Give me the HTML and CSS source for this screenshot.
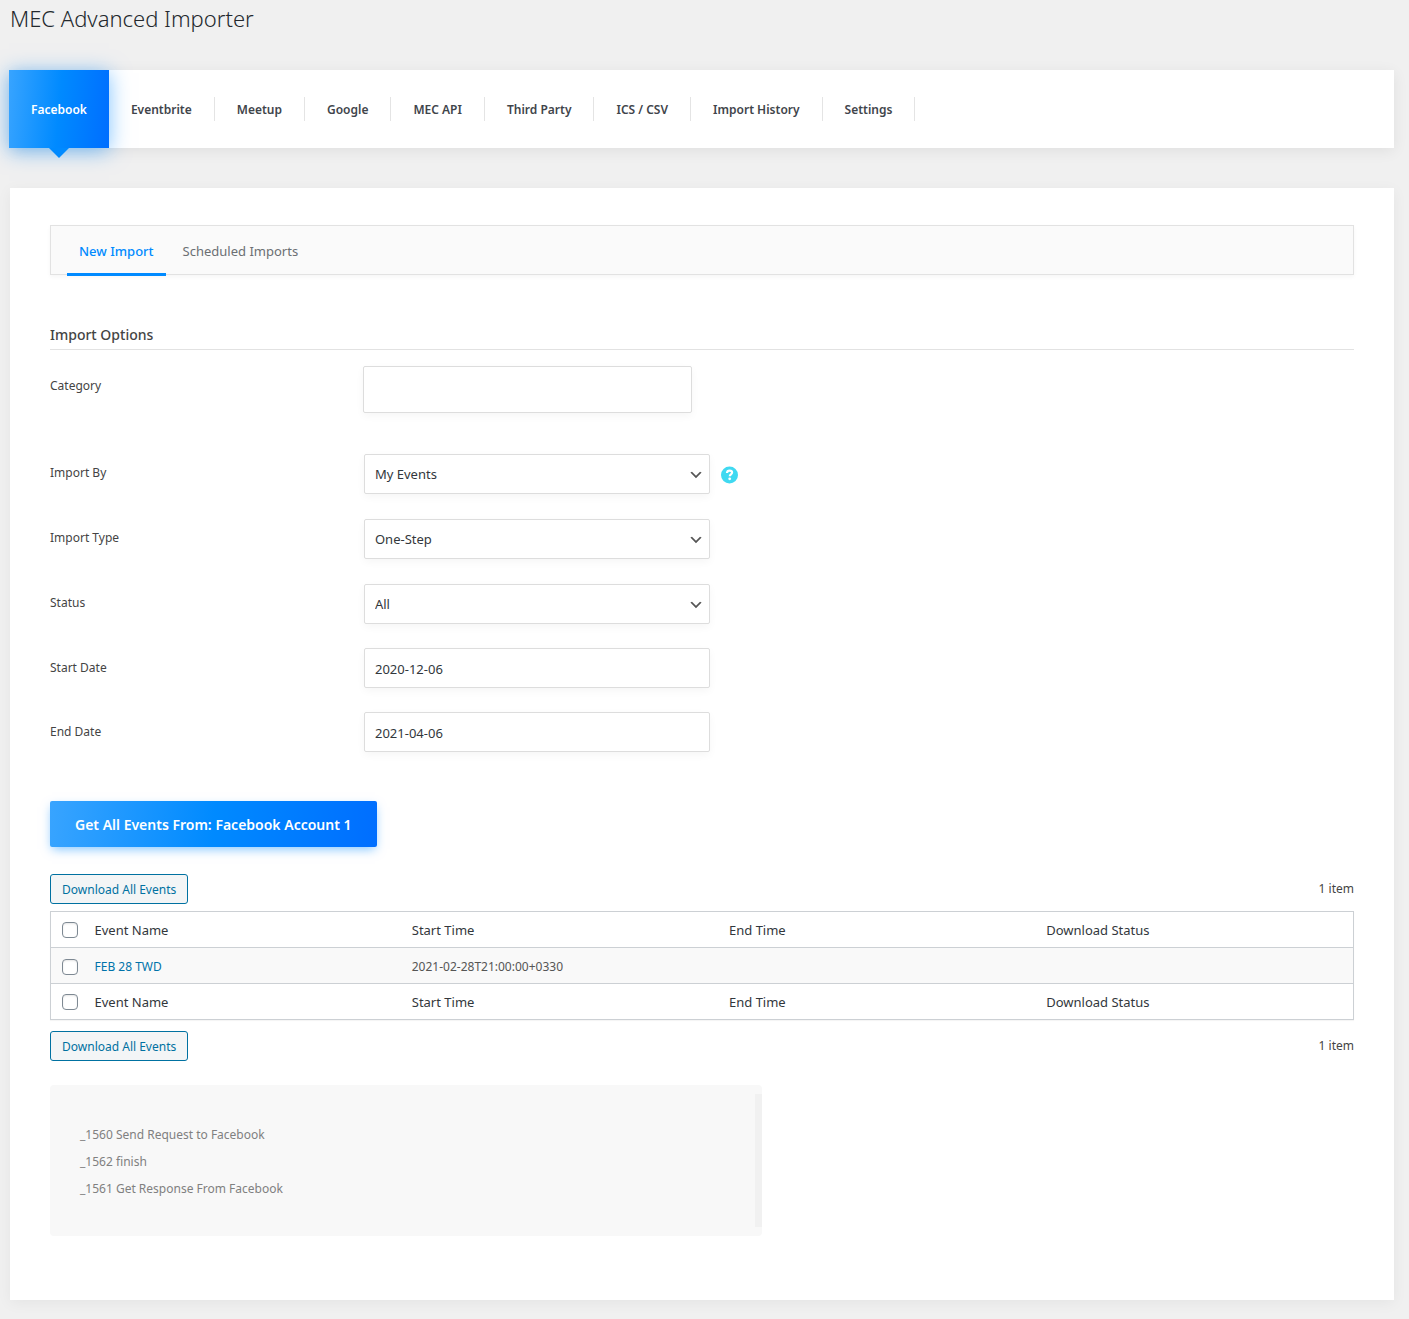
FILE: index.html
```html
<!DOCTYPE html>
<html lang="en">
<head>
  <meta charset="utf-8">
  <meta name="viewport" content="width=device-width, initial-scale=1">
  <title>MEC Advanced Importer</title>
  <link rel="stylesheet" href="styles.css">
</head>
<body>
  <main class="wrap">
    <h1 class="page-title">MEC Advanced Importer</h1>

    <nav class="main-tabs" aria-label="Import sources">
      <a class="main-tab main-tab--active" href="#facebook" aria-current="page">Facebook</a>
      <a class="main-tab" href="#eventbrite">Eventbrite</a>
      <a class="main-tab" href="#meetup">Meetup</a>
      <a class="main-tab" href="#google">Google</a>
      <a class="main-tab" href="#mec-api">MEC API</a>
      <a class="main-tab" href="#third-party">Third Party</a>
      <a class="main-tab" href="#ics-csv">ICS / CSV</a>
      <a class="main-tab" href="#history">Import History</a>
      <a class="main-tab" href="#settings">Settings</a>
    </nav>

    <section class="panel" id="facebook">
      <nav class="sub-tabs" aria-label="Import mode">
        <a class="sub-tab sub-tab--active" href="#new-import" aria-current="page">New Import</a>
        <a class="sub-tab" href="#scheduled">Scheduled Imports</a>
      </nav>

      <form class="import-form">
        <h2 class="section-title">Import Options</h2>

        <div class="field field--category">
          <label class="field-label" for="category">Category</label>
          <input class="control control--category" type="text" id="category">
        </div>
        <div class="field field--select">
          <label class="field-label" for="import-by">Import By</label>
          <select class="control control--select" id="import-by"><option>My Events</option></select>
          <button class="help" type="button" aria-label="Help">
            <svg class="help-icon" viewBox="0 0 18 18" aria-hidden="true">
              <circle cx="8.5" cy="9" r="8.5" fill="#40d9f1"/>
              <path d="M6 7C6.100 5.300 7.200 4.600 8.600 4.600c1.500 0 2.500.7 2.500 2 0 1.700-2.300 1.800-2.300 3.600" fill="none" stroke="#fff" stroke-width="2.200"/>
              <circle cx="8.700" cy="12.800" r="1.400" fill="#fff"/>
            </svg>
          </button>
        </div>
        <div class="field field--select">
          <label class="field-label" for="import-type">Import Type</label>
          <select class="control control--select" id="import-type"><option>One-Step</option></select>
        </div>
        <div class="field field--select">
          <label class="field-label" for="status">Status</label>
          <select class="control control--select" id="status"><option>All</option></select>
        </div>
        <div class="field">
          <label class="field-label" for="start-date">Start Date</label>
          <input class="control" type="text" id="start-date" value="2020-12-06">
        </div>
        <div class="field">
          <label class="field-label" for="end-date">End Date</label>
          <input class="control" type="text" id="end-date" value="2021-04-06">
        </div>

        <button class="btn-primary" type="button">Get All Events From: Facebook Account 1</button>
      </form>

      <div class="table-nav">
        <button class="btn-secondary" type="button">Download All Events</button>
        <span class="item-count">1 item</span>
      </div>
      <table class="events">
        <thead>
          <tr>
            <td class="check-cell"><input class="check" type="checkbox" aria-label="Select all"></td>
            <th scope="col">Event Name</th>
            <th scope="col">Start Time</th>
            <th scope="col">End Time</th>
            <th scope="col">Download Status</th>
          </tr>
        </thead>
        <tbody>
          <tr>
            <td class="check-cell"><input class="check" type="checkbox" aria-label="Select FEB 28 TWD"></td>
            <td><a class="event-link" href="#event">FEB 28 TWD</a></td>
            <td>2021-02-28T21:00:00+0330</td>
            <td></td>
            <td></td>
          </tr>
        </tbody>
        <tfoot>
          <tr>
            <td class="check-cell"><input class="check" type="checkbox" aria-label="Select all"></td>
            <th scope="col">Event Name</th>
            <th scope="col">Start Time</th>
            <th scope="col">End Time</th>
            <th scope="col">Download Status</th>
          </tr>
        </tfoot>
      </table>
      <div class="table-nav table-nav--bottom">
        <button class="btn-secondary" type="button">Download All Events</button>
        <span class="item-count">1 item</span>
      </div>

      <div class="log">
        <div class="log-lines">
          <p class="log-line">_1560 Send Request to Facebook</p>
          <p class="log-line">_1562 finish</p>
          <p class="log-line">_1561 Get Response From Facebook</p>
        </div>
        <div class="log-track"></div>
      </div>
    </section>
  </main>
</body>
</html>
```
FILE: styles.css
```css
*,
*::before,
*::after {
  box-sizing: border-box;
}

body {
  margin: 0;
  background: #f0f0f0;
  color: #444;
  font-family: "Noto Sans", "Open Sans", sans-serif;
  font-size: 12px;
  line-height: 20px;
}

a {
  text-decoration: none;
}

button,
input,
select {
  margin: 0;
  font-family: inherit;
}

.wrap {
  padding: 4px 15px 19px 10px;
}

.page-title {
  margin: 0 0 38px;
  color: #23282d;
  font-size: 22px;
  font-weight: 300;
  line-height: 28px;
}

/* Source tabs */
.main-tabs {
  display: flex;
  align-items: center;
  min-height: 78px;
  margin-bottom: 40px;
  background: #fff;
  box-shadow: 0 3px 14px rgba(0, 0, 0, 0.07);
}

.main-tab {
  padding: 4px 22px 2px;
  border-right: 1px solid #e4e4e4;
  color: #3f454b;
  font-weight: 600;
  line-height: 18px;
}

.main-tab--active {
  position: relative;
  display: flex;
  align-items: center;
  align-self: stretch;
  margin-left: -1px;
  border-right: 0;
  background: linear-gradient(95deg, #38a4ff 0%, #008aff 50%, #006eff 100%);
  box-shadow: 0 3px 20px rgba(0, 138, 255, 0.5);
  color: #fff;
}

.main-tab--active::after {
  content: "";
  position: absolute;
  top: 100%;
  left: 50%;
  margin-left: -10px;
  border: 10px solid transparent;
  border-top-color: #008aff;
  border-bottom: 0;
}

/* Panel */
.panel {
  padding: 37px 40px 64px;
  background: #fff;
  box-shadow: 0 3px 14px rgba(0, 0, 0, 0.05);
}

.sub-tabs {
  display: flex;
  height: 50px;
  margin-bottom: 50px;
  padding-left: 16px;
  border: 1px solid #e2e2e2;
  background: #fafafa;
  box-shadow: 0 2px 4px rgba(0, 0, 0, 0.04);
}

.sub-tab {
  height: 50px;
  padding: 15px 12px 0;
  margin-right: 5px;
  color: #6b6f73;
  font-size: 13px;
}

.sub-tab--active {
  border-bottom: 3px solid #008aff;
  color: #008aff;
  font-weight: 500;
}

.section-title {
  margin: 0 0 16px;
  padding-bottom: 4px;
  border-bottom: 1px solid #e2e2e2;
  color: #444;
  font-size: 14px;
  font-weight: 500;
  line-height: 20px;
}

/* Form rows */
.field {
  display: flex;
  align-items: flex-start;
  margin-top: 24px;
}

.field--select {
  margin-top: 25px;
}

.field--category {
  margin: 0 0 41px;
}

.field--category + .field--select {
  margin-top: 0;
}

.field-label {
  width: 24%;
  margin-right: 1px;
  padding-top: 10px;
}

.field--select .field-label {
  padding-top: 9px;
}

.field--category .field-label {
  margin-right: 0;
}

.control {
  width: 346px;
  height: 40px;
  padding: 2px 10px 0;
  border: 1px solid #ddd;
  border-radius: 2px;
  background: #fff;
  box-shadow: 0 3px 8px rgba(0, 0, 0, 0.04);
  color: #32373c;
  font-size: 13px;
}

.control--category {
  width: 329px;
  height: 47px;
}

.control--select {
  padding: 0 24px 0 10px;
  appearance: none;
  background: #fff url('data:image/svg+xml;utf8,<svg xmlns="http://www.w3.org/2000/svg" width="20" height="20"><path d="M5 6l5 5 5-5 2 1-7 7-7-7 2-1z" fill="%23555"/></svg>') no-repeat right 5px top 55%;
  background-size: 16px 16px;
}

.help {
  width: 18px;
  height: 18px;
  margin: 12px 0 0 11px;
  padding: 0;
  border: 0;
  background: none;
}

.help-icon {
  display: block;
}

.btn-primary {
  display: block;
  height: 46px;
  margin: 49px 0 27px;
  padding: 0 25px;
  border: 0;
  border-radius: 2px;
  background: linear-gradient(95deg, #38a4ff 0%, #008aff 50%, #006eff 100%);
  box-shadow: 0 4px 10px -2px rgba(0, 138, 255, 0.5);
  color: #fff;
  font-size: 14px;
  font-weight: 600;
}

/* Events table */
.table-nav {
  display: flex;
  justify-content: space-between;
  margin-bottom: 7px;
}

.table-nav--bottom {
  margin: 11px 0 24px;
}

.btn-secondary {
  height: 30px;
  padding: 0 11px;
  border: 1px solid #0071a1;
  border-radius: 3px;
  background: #f3f5f6;
  color: #0071a1;
  font-size: 12px;
}

.item-count {
  line-height: 30px;
}

.events {
  width: 100%;
  border: 1px solid #ccd0d4;
  border-collapse: collapse;
  table-layout: fixed;
  box-shadow: 0 1px 1px rgba(0, 0, 0, 0.04);
}

.events tr {
  height: 36px;
  border-bottom: 1px solid #ccd0d4;
}

.events tbody tr {
  background: #f9f9f9;
}

.events th,
.events td {
  padding: 0 10px;
  text-align: left;
  vertical-align: middle;
}

.events th {
  color: #32373c;
  font-size: 13px;
  font-weight: 400;
}

.events td {
  color: #555;
}

.events tbody td {
  padding-top: 2px;
}

.events .check-cell {
  width: 34px;
  padding-left: 11px;
  padding-right: 0;
}

.check {
  display: block;
  width: 16px;
  height: 16px;
  appearance: none;
  border: 1px solid #7e8993;
  border-radius: 4px;
  background: #fff;
  box-shadow: inset 0 1px 2px rgba(0, 0, 0, 0.1);
}

.check:checked {
  background: #0071a1;
}

.event-link {
  color: #0073aa;
}

/* Request log */
.log {
  display: flex;
  justify-content: space-between;
  max-width: 712px;
  padding: 9px 0;
  border-radius: 4px;
  background: #f8f8f8;
}

.log-lines {
  padding: 27px 30px 25px;
}

.log-line {
  margin: 0;
  color: #808080;
  line-height: 27px;
}

.log-track {
  width: 7px;
  background: #f1f1f1;
}
```
